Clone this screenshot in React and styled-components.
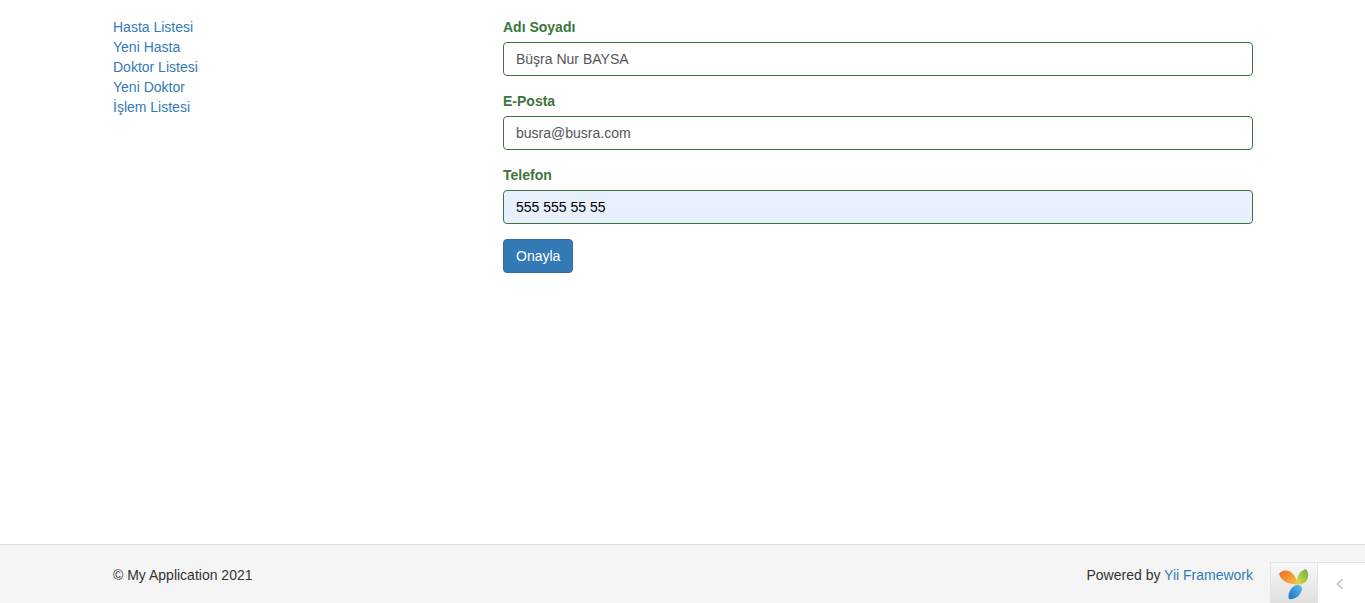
import React from "react";
import styled, { createGlobalStyle } from "styled-components";

const GlobalStyle = createGlobalStyle`
  * {
    box-sizing: border-box;
  }
  body {
    margin: 0;
    background: #fff;
    color: #333;
    font-family: "Liberation Sans", Arial, sans-serif;
    font-size: 14px;
    line-height: 20px;
  }
`;

const Wrap = styled.div`
  height: 603px;
  display: flex;
  flex-direction: column;
  overflow: hidden;
`;

const Container = styled.div`
  width: 1170px;
  margin-left: 98px;
  padding: 0 15px;
`;

const Main = styled(Container)`
  flex: 1;
  display: grid;
  grid-template-columns: 390px 750px;
  padding-top: 17px;
`;

const SideMenu = styled.ul`
  list-style: none;
  margin: 0;
  padding: 0;
`;

const MenuLink = styled.a`
  color: #337ab7;
  text-decoration: none;
`;

const FormGroup = styled.div`
  margin-bottom: 15px;
`;

const Label = styled.label`
  display: block;
  margin-bottom: 5px;
  font-weight: 700;
  color: #3c763d;
`;

const Input = styled.input`
  display: block;
  width: 100%;
  height: 34px;
  padding: 6px 12px;
  font-family: inherit;
  font-size: 14px;
  line-height: 20px;
  color: ${({ $autofilled }) => ($autofilled ? "#000" : "#555")};
  background: ${({ $autofilled }) => ($autofilled ? "#e8f0fe" : "#fff")};
  border: 1px solid #3c763d;
  border-radius: 4px;
  outline: none;
`;

const Submit = styled.button`
  display: block;
  height: 34px;
  padding: 6px 12px;
  font-family: inherit;
  font-size: 14px;
  line-height: 20px;
  color: #fff;
  background: #337ab7;
  border: 1px solid #2e6da4;
  border-radius: 4px;
`;

const Footer = styled.footer`
  height: 59px;
  flex: none;
  padding-top: 20px;
  background: #f5f5f5;
  border-top: 1px solid #ddd;
`;

const FooterRow = styled(Container)`
  display: flex;
  justify-content: space-between;
`;

const FooterText = styled.p`
  margin: 0;
`;

const DebugToolbar = styled.div`
  position: fixed;
  right: 0;
  bottom: 0;
  width: 95px;
  height: 41px;
  display: flex;
  background: #fff;
  border-top: 1px solid #e4e4e4;
  border-left: 1px solid #e4e4e4;
`;

const DebugLogo = styled.div`
  width: 47px;
  display: flex;
  justify-content: center;
  padding-top: 6px;
  background: linear-gradient(#f7f7f7, #e0e0e0);
  border-right: 1px solid #e4e4e4;
`;

const DebugToggle = styled.div`
  flex: 1;
  display: flex;
  align-items: center;
  justify-content: center;
  padding: 2px 3px 0 0;
`;

const YiiLogo = () => (
  <svg width="30" height="31" viewBox="0 0 30 31">
    <defs>
      <linearGradient id="yiiOrange" x1="0" y1="0" x2="1" y2="1">
        <stop offset="0" stopColor="#ee6a1f" />
        <stop offset="1" stopColor="#f8c24e" />
      </linearGradient>
      <linearGradient id="yiiGreen" x1="0" y1="1" x2="1" y2="0">
        <stop offset="0" stopColor="#e8d84a" />
        <stop offset="0.5" stopColor="#a3c93f" />
        <stop offset="1" stopColor="#5fae45" />
      </linearGradient>
      <linearGradient id="yiiBlue" x1="1" y1="0" x2="0" y2="1">
        <stop offset="0" stopColor="#5cc0ea" />
        <stop offset="1" stopColor="#1f6fc4" />
      </linearGradient>
    </defs>
    <path d="M0 5 C2 1 9 0 13 4 C16 7 18 11 19 15 C13 16 3 14 0 5Z" fill="url(#yiiOrange)" />
    <path d="M19 16 C16 10 20 2 27 0 C31 5 30 15 19 16Z" fill="url(#yiiGreen)" />
    <path d="M10 30 C8 24 13 16 19 16 C23 16 24 20 22 23 C20 28 14 31 10 30Z" fill="url(#yiiBlue)" />
  </svg>
);

const menuItems = ["Hasta Listesi", "Yeni Hasta", "Doktor Listesi", "Yeni Doktor", "İşlem Listesi"];

export default function App() {
  return (
    <>
      <GlobalStyle />
      <Wrap>
        <Main>
          <SideMenu>
            {menuItems.map((item) => (
              <li key={item}>
                <MenuLink href="#">{item}</MenuLink>
              </li>
            ))}
          </SideMenu>
          <form onSubmit={(e) => e.preventDefault()}>
            <FormGroup>
              <Label>Adı Soyadı</Label>
              <Input defaultValue="Büşra Nur BAYSA" />
            </FormGroup>
            <FormGroup>
              <Label>E-Posta</Label>
              <Input defaultValue="busra@busra.com" />
            </FormGroup>
            <FormGroup>
              <Label>Telefon</Label>
              <Input $autofilled defaultValue="555 555 55 55" />
            </FormGroup>
            <Submit type="submit">Onayla</Submit>
          </form>
        </Main>
        <Footer>
          <FooterRow>
            <FooterText>© My Application 2021</FooterText>
            <FooterText>
              Powered by <MenuLink href="#">Yii Framework</MenuLink>
            </FooterText>
          </FooterRow>
        </Footer>
      </Wrap>
      <DebugToolbar>
        <DebugLogo>
          <YiiLogo />
        </DebugLogo>
        <DebugToggle>
          <svg width="10" height="14" viewBox="0 0 10 14">
            <path d="M7.5 2 L2.5 7 L7.5 12" fill="none" stroke="#c4c4c4" strokeWidth="1.6" />
          </svg>
        </DebugToggle>
      </DebugToolbar>
    </>
  );
}
